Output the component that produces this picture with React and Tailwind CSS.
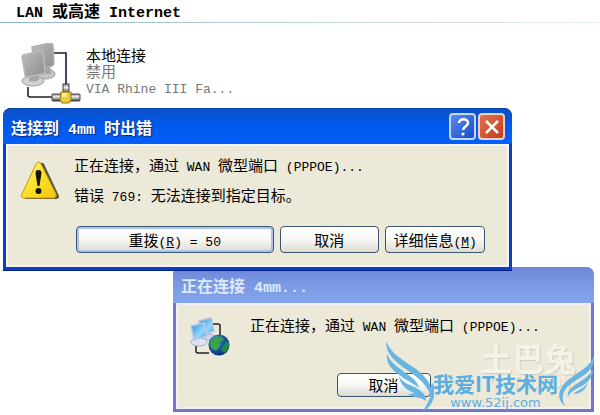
import React from 'react';

const cjk = "font-['Noto_Sans_CJK_SC',sans-serif]";
const latin = "font-['Liberation_Mono','Noto_Sans_CJK_SC',monospace]";

const Latin = ({ children, className = 'text-[13px]' }) => (
  <span className={`${latin} ${className} leading-none whitespace-pre`}>{children}</span>
);

const LanIcon = () => (
  <svg className="w-[62px] h-[62px] shrink-0" viewBox="0 0 62 62" aria-hidden="true">
    <defs>
      <linearGradient id="lanScreen" x1="0" y1="0" x2="1" y2="1">
        <stop offset="0" stopColor="#bdbdbd" />
        <stop offset="1" stopColor="#8e8e8e" />
      </linearGradient>
      <linearGradient id="lanPipe" x1="0" y1="0" x2="0" y2="1">
        <stop offset="0" stopColor="#8a8a8a" />
        <stop offset="0.4" stopColor="#f0f0f0" />
        <stop offset="1" stopColor="#333333" />
      </linearGradient>
    </defs>
    <path d="M34 10H46V42" fill="none" stroke="#151b3a" strokeWidth="1.6" />
    <path d="M8 44V52Q8 54 10 54H34" fill="none" stroke="#222222" strokeWidth="1.6" />
    <ellipse cx="26" cy="31" rx="9" ry="5" fill="#c4c4c4" stroke="#9a9a9a" />
    <path d="M23 21L30 20L31 31H22Z" fill="#a4a4a4" />
    <path d="M12 4L30 0Q33 0 33 3L34 20Q34 22 32 23L15 27Z" fill="url(#lanScreen)" stroke="#b0b0b0" strokeWidth="1.500" />
    <ellipse cx="13" cy="38" rx="11" ry="5" fill="#d2d2d2" stroke="#a0a0a0" />
    <path d="M10 28L18 27L19 37Q14 40 9 38Z" fill="#a6a6a6" />
    <path d="M3 12L20 8Q23 8 23 10L25 28Q25 30 23 31L7 34Q5 34 5 32L2 14Q2 12 3 12Z" fill="url(#lanScreen)" stroke="#bababa" strokeWidth="1.500" />
    <rect x="32" y="51" width="28" height="7" rx="1" fill="url(#lanPipe)" stroke="#444444" />
    <rect x="43" y="41" width="6" height="9" fill="url(#lanPipe)" stroke="#444444" />
    <path d="M41 49H51V57L49 60H42L40 57Z" fill="#efc936" stroke="#94751a" />
    <path d="M42 50H47V54H42Z" fill="#ffee8c" />
  </svg>
);

const WarningIcon = () => (
  <svg className="w-10 h-10 shrink-0" viewBox="0 0 40 40" aria-hidden="true">
    <defs>
      <linearGradient id="warn" x1="0" y1="0" x2="1" y2="1">
        <stop offset="0" stopColor="#fff87c" />
        <stop offset="0.5" stopColor="#fbe028" />
        <stop offset="1" stopColor="#f0c414" />
      </linearGradient>
    </defs>
    <path d="M20 3Q22 2 24 4L39 36Q39 39 36 39H5Z" fill="#55503c" />
    <path d="M16 4Q19 0 21 4L36 34Q37 38 33 38H4Q0 38 2 34Z" fill="url(#warn)" stroke="#c59a13" />
    <path d="M15.500 13Q15.500 10 18.500 10T21.500 13L19.500 26H17.500Z" fill="#161200" />
    <circle cx="18.500" cy="31" r="3" fill="#161200" />
  </svg>
);

const DialIcon = () => (
  <svg className="w-10 h-10 shrink-0" viewBox="0 0 40 40" aria-hidden="true">
    <defs>
      <linearGradient id="dialScreen" x1="0" y1="0" x2="1" y2="1">
        <stop offset="0" stopColor="#2f8fe0" />
        <stop offset="0.6" stopColor="#93d8fa" />
        <stop offset="1" stopColor="#3ba0e0" />
      </linearGradient>
      <radialGradient id="globe" cx="0.35" cy="0.3" r="0.75">
        <stop offset="0" stopColor="#7cc4ee" />
        <stop offset="0.35" stopColor="#2468b4" />
        <stop offset="1" stopColor="#0c2a78" />
      </radialGradient>
    </defs>
    <path d="M22 7H28Q30 7 30 9V18" fill="none" stroke="#222222" strokeWidth="1.500" />
    <path d="M6 28V34Q6 36 8 36H19" fill="none" stroke="#222222" strokeWidth="1.500" />
    <ellipse cx="19" cy="20" rx="6" ry="3" fill="#d0d4ea" stroke="#a8aecb" />
    <path d="M9 4L21 1L24 14L12 18Z" fill="url(#dialScreen)" stroke="#b4bedc" strokeWidth="1.500" />
    <ellipse cx="9" cy="25" rx="8" ry="4" fill="#dfe2f2" stroke="#a8aecb" />
    <path d="M1 9L14 6L17 19L4 23Z" fill="url(#dialScreen)" stroke="#bcc6e2" strokeWidth="1.500" />
    <circle cx="29" cy="28" r="10.500" fill="url(#globe)" />
    <path d="M20 25Q24 18 32 20L34 23L29 25L30 29L26 34L21 31Z" fill="#36a447" />
    <path d="M34 27L38 24Q41 32 34 36L31 33Z" fill="#1f8a46" />
  </svg>
);

const XpButton = ({ children, className }) => (
  <button
    type="button"
    className={`border border-[#3b566f] rounded-[4px] bg-linear-to-b from-white via-[#f7f7f4] to-[#dddcd2] text-[15px] leading-5 text-black whitespace-nowrap ${className}`}
  >
    {children}
  </button>
);

const LeftWing = () => (
  <svg className="w-[50px] h-[70px] -mr-px" viewBox="0 0 50 70" fill="#69b5e2" aria-hidden="true">
    <path d="M2 0C7 13 19 19 32 28C43 36 50 46 48 59C45 45 35 37 23 29C10 20 2 13 2 0Z" />
    <path d="M3 13C7 23 17 28 27 36C32 40 34 43 35 47C28 41 21 39 14 33C6 27 2 21 3 13Z" />
    <path d="M15 35C19 44 31 44 38 51C41 54 42 57 42 60C36 55 31 58 24 53C27 53 29 53 30 52C23 49 16 44 15 35Z" />
    <path d="M49 42C53 55 48 66 39 70C43 63 48 57 47 44Z" />
  </svg>
);

const RightWing = () => (
  <svg className="w-[42px] h-[52px] mb-1 -ml-0.5" viewBox="0 0 42 52" fill="#69b5e2" aria-hidden="true">
    <path d="M38 1C33 13 22 17 12 25C2 33 0 44 9 51C5 43 6 35 16 28C28 20 39 16 38 1Z" />
    <path d="M37 14C33 22 26 25 19 30C13 34 11 38 12 42C14 37 18 35 24 32C32 28 37 22 37 14Z" />
    <path d="M32 27C29 33 22 35 17 39C23 39 30 36 32 27Z" />
  </svg>
);

export default function App() {
  return (
    <main className={`relative min-h-screen overflow-hidden bg-white text-black ${cjk}`}>
      {/* Connection list */}
      <header className="pl-4 text-base leading-5 font-bold">
        <h1 className="h-[22px]">
          <Latin className="text-[15px]">LAN </Latin>或高速<Latin className="text-[15px]"> Internet</Latin>
        </h1>
        <div className="-ml-4 h-px bg-linear-to-r from-[#8fb4cc] to-[#e6f0f6]" />
      </header>
      <section className="h-[85px] pt-5 pl-5 flex gap-1">
        <LanIcon />
        <div className="pt-1 text-[15px] leading-4">
          <p>本地连接</p>
          <p className="text-[#777777]">禁用</p>
          <p className="text-[#777777]"><Latin>VIA Rhine III Fa...</Latin></p>
        </div>
      </section>

      {/* Error dialog */}
      <section className="relative z-10 ml-[3px] mr-[88px] rounded-t-lg bg-[#0a3fc4] px-[3px] pb-[3px] border-b border-[#001d80]">
        <div className="-mx-[3px] h-9 pl-2 pr-[7px] flex items-center justify-between rounded-t-lg bg-linear-to-b from-[#0a50c8] via-[#0058ee] to-[#0560fa] border-t border-[#0842b0]">
          <h2 className="text-base font-bold text-white [text-shadow:1px_1px_1px_#0a2a80]">
            连接到<Latin className="text-[15px]"> 4mm </Latin>时出错
          </h2>
          <div className="flex gap-0.5">
            <button type="button" aria-label="帮助" className="size-[27px] rounded border-2 border-[#c5d8fa] bg-linear-to-br from-[#5b8cf0] to-[#164bc4] flex items-center justify-center text-white">
              <svg className="w-4 h-5" viewBox="0 0 16 20" fill="none" aria-hidden="true">
                <path d="M4 6C4 1 13 1 13 6C13 9 9 9 8 13" stroke="currentColor" strokeWidth="2.500" />
                <circle cx="8" cy="17" r="1.600" fill="currentColor" />
              </svg>
            </button>
            <button type="button" aria-label="关闭" className="size-[27px] rounded border-2 border-[#f3cfc9] bg-linear-to-br from-[#e07050] to-[#c43a16] flex items-center justify-center text-white">
              <svg className="size-4" viewBox="0 0 16 16" aria-hidden="true">
                <path d="M2 2L14 14M14 2L2 14" stroke="currentColor" strokeWidth="2.500" />
              </svg>
            </button>
          </div>
        </div>
        <div className="bg-[#ece9d8] border-2 border-[#f3f3fa] pb-3">
          <div className="flex items-center gap-3 pt-1 pl-3">
            <WarningIcon />
            <div className="pl-0.5 text-[15px] leading-[30px] whitespace-nowrap">
              <p>正在连接，通过<Latin> WAN </Latin>微型端口<Latin> (PPPOE)...</Latin></p>
              <p>错误<Latin> 769: </Latin>无法连接到指定目标。</p>
            </div>
          </div>
          <div className="flex gap-1.5 pt-4 pl-[68px] pr-[22px]">
            <XpButton className="h-[27px] flex-2 ring-2 ring-inset ring-[#a9c3ee]">
              重拨<Latin>(<u>R</u>) = 50</Latin>
            </XpButton>
            <XpButton className="h-[27px] flex-1">取消</XpButton>
            <XpButton className="h-[27px] flex-1">详细信息<Latin>(<u>M</u>)</Latin></XpButton>
          </div>
        </div>
      </section>

      {/* Progress dialog */}
      <section className="relative -mt-1 ml-[173px] mr-1.5 rounded-t-lg bg-[#6f76cc] px-[3px] pb-[3px]">
        <div className="-mx-[3px] h-9 pl-2 flex items-center rounded-t-lg bg-linear-to-b from-[#6d86d8] via-[#7a9ae4] to-[#84a5ec]">
          <h2 className="text-base font-bold text-[#dfe9fc]">
            正在连接<Latin className="text-[15px]"> 4mm...</Latin>
          </h2>
        </div>
        <div className="bg-[#ece9d8] border-2 border-[#f0eff6] pb-2.5">
          <div className="flex gap-5 pt-3 pl-3">
            <DialIcon />
            <p className="text-[15px] leading-4 whitespace-nowrap">
              正在连接，通过<Latin> WAN </Latin>微型端口<Latin> (PPPOE)...</Latin>
            </p>
          </div>
          <div className="flex justify-center pt-4">
            <XpButton className="h-6 w-[94px]">取消</XpButton>
          </div>
        </div>
      </section>

      {/* Site marks */}
      <div className="absolute right-6 bottom-[22px] z-20 text-[#f5f2e8] [text-shadow:1px_1px_1px_#cdcabd]" aria-hidden="true">
        <p className="text-[32px] leading-8 font-bold">土巴兔</p>
        <p className="font-['Liberation_Sans',sans-serif] text-[16px] leading-5">TO8TO.COM</p>
      </div>
      <div className="absolute right-0.5 bottom-1 z-30 flex items-end" aria-hidden="true">
        <LeftWing />
        <div className="text-center text-[#5aaee0]">
          <p className="text-[21px] leading-6 font-bold whitespace-nowrap">我爱IT技术网</p>
          <p className="font-['DejaVu_Sans',sans-serif] text-[13px] leading-4">www.52ij.com</p>
        </div>
        <RightWing />
      </div>
    </main>
  );
}
